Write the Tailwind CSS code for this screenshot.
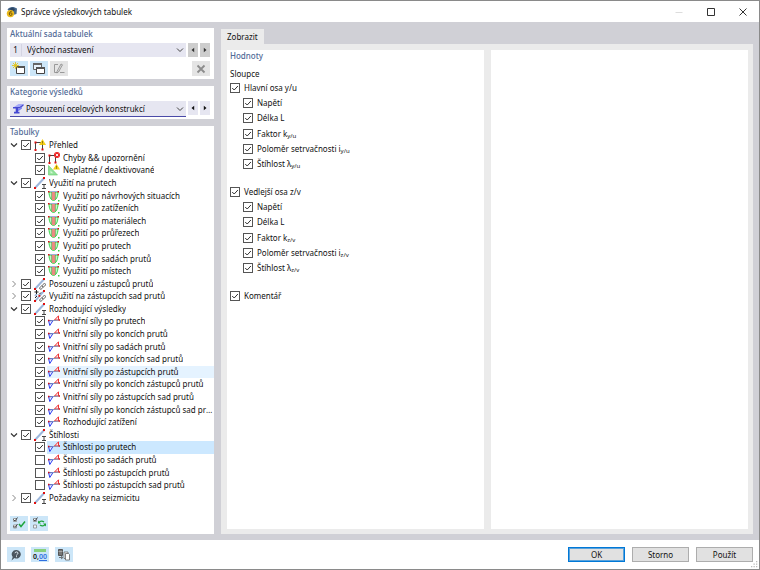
<!DOCTYPE html>
<html lang="cs">
<head>
<meta charset="utf-8">
<meta name="viewport" content="width=device-width, initial-scale=1">
<title>Správce výsledkových tabulek</title>
<script src="https://cdn.jsdelivr.net/npm/@tailwindcss/browser@4"></script>
</head>
<body class="flex h-screen flex-col border border-[#8a8a8a] bg-white font-['Noto_Sans','Open_Sans',sans-serif] text-[8px] leading-[12px] text-[#111]">

<svg class="hidden" aria-hidden="true">
  <symbol id="i-overview" viewBox="0 0 12 12">
    <path d="M1.500 11V3.500h7V10" fill="none" stroke="#444" stroke-width="1"/>
    <path d="M.5 2.500h2v2h-2zM.5 10h2v2h-2zM7.500 9.500h2v2h-2z" fill="#e01010"/>
    <path d="M8.500 0 12 6H5z" fill="#f5cf17"/><path d="M8.500 2v2.200M8.500 4.700v.8" stroke="#6b5600" stroke-width=".7"/>
  </symbol>
  <symbol id="i-errors" viewBox="0 0 12 12">
    <path d="M1.500 11V3.500h6V10" fill="none" stroke="#444" stroke-width="1"/>
    <path d="M.5 2.500h2v2h-2zM.5 10h2v2h-2zM6.500 9.500h2v2h-2z" fill="#e01010"/>
    <circle cx="9" cy="3" r="3" fill="#ee2424"/><path d="M7.800 1.800l2.400 2.400M10.200 1.800 7.800 4.200" stroke="#fff" stroke-width=".9"/>
  </symbol>
  <symbol id="i-invalid" viewBox="0 0 12 12">
    <path d="M.5 1.500v9.500h9z" fill="#93e39a" stroke="#63c96d" stroke-width=".6"/><path d="M2.500 6.500v2.700h2.700z" fill="#d5f7d7"/>
    <path d="M8.500 0 12 5.500H5z" fill="#f5cf17"/><path d="M8.500 1.800v2M8.500 4.300v.7" stroke="#6b5600" stroke-width=".7"/>
  </symbol>
  <symbol id="i-member" viewBox="0 0 12 12">
    <path d="M1.200 10.800 10 1.200" stroke="#9db7dc" stroke-width="2"/>
    <path d="M0 10h2v2H0zM9 0h2v2H9z" fill="#e01010"/>
    <path d="M8 7.500h4M8 11.500h4M10 7.500v4" stroke="#444" stroke-width="1"/>
  </symbol>
  <symbol id="i-rep" viewBox="0 0 12 12">
    <path d="M1.200 10.800 10 1.200" stroke="#9db7dc" stroke-width="2"/>
    <path d="M0 10h2v2H0zM9 0h2v2H9z" fill="#e01010"/>
    <g fill="none" stroke="#666" stroke-width=".9"><ellipse cx="7.300" cy="9.600" rx="1.200" ry="2" transform="rotate(45 7.300 9.600)"/><ellipse cx="9.900" cy="7.200" rx="1.200" ry="2" transform="rotate(45 9.900 7.200)"/></g>
  </symbol>
  <symbol id="i-repset" viewBox="0 0 12 12">
    <path d="M1.200 10.800 10 1.200M1 6l2-2" stroke="#9db7dc" stroke-width="1.800"/>
    <path d="M0 10h2v2H0zM9 0h2v2H9zM4.500 5h1.800v1.800H4.500z" fill="#e01010"/>
    <path d="M.5 2h4M2.500 0v4M7 2.500 5 4.500M1 8l2-2" stroke="#222" stroke-width="1"/>
    <g fill="none" stroke="#666" stroke-width=".9"><ellipse cx="7.300" cy="9.600" rx="1.200" ry="2" transform="rotate(45 7.300 9.600)"/><ellipse cx="9.900" cy="7.200" rx="1.200" ry="2" transform="rotate(45 9.900 7.200)"/></g>
  </symbol>
  <symbol id="i-usage" viewBox="0 0 12 12">
    <path d="M1 2C1 6.500 3 10.500 5.500 10.500S10 6.500 10 2z" fill="#c4f7c6" stroke="#35d845" stroke-width="1"/>
    <path d="M4 2h3v8H4z" fill="#ee8b84"/><path d="M3.600 2v7.500M7.400 2v7.500" stroke="#4f8a3c" stroke-width=".6"/>
    <path d="M1 1.500h9" stroke="#9db2d8" stroke-width="1"/>
    <path d="M0 1h1.500v1.500H0zM9.500 1H11v1.500H9.500z" fill="#e01010"/><path d="M10 10h1.500v1.500H10z" fill="#35d040"/>
  </symbol>
  <symbol id="i-force" viewBox="0 0 12 12">
    <path d="M.5 5.500 5 5.500 1.800 10.500z" fill="#eef0ff" stroke="#2a3cf5" stroke-width="1"/>
    <path d="M6.500 5 10.500.8V5z" fill="#ffe9e9" stroke="#f03030" stroke-width="1"/>
    <path d="M1 6 11.500 5" stroke="#8593b5" stroke-width="1"/>
    <path d="M0 4.800h1.400v1.400H0zM10.600 4.300H12v1.400h-1.400z" fill="#e01010"/>
  </symbol>
  <symbol id="i-down" viewBox="0 0 8 8"><path d="M1 2.500 4 5.500l3-3" fill="none" stroke="#333" stroke-width="1.200"/></symbol>
  <symbol id="i-right" viewBox="0 0 8 8"><path d="M2.500 1 5.500 4l-3 3" fill="none" stroke="#888" stroke-width="1"/></symbol>
  <symbol id="i-combo" viewBox="0 0 8 8"><path d="M1 2.500 4 5.500l3-3" fill="none" stroke="#444" stroke-width="1"/></symbol>
  <symbol id="i-prev" viewBox="0 0 6 6"><path d="M4.200.8v4.400L1.500 3z" fill="currentColor"/></symbol>
  <symbol id="i-next" viewBox="0 0 6 6"><path d="M1.800.8v4.400L4.500 3z" fill="currentColor"/></symbol>
  <symbol id="i-check" viewBox="0 0 10 10"><path d="M2.200 5 4.200 7 7.900 3" fill="none" stroke="#333" stroke-width="1"/></symbol>
</svg>

<header class="flex h-[21px] shrink-0 items-center pl-[5px]">
  <svg class="mr-[3px] size-[12px]" viewBox="0 0 12 12"><path d="M1.500 3.500C3 .5 8 0 11 2.500L10.500 8 7 9z" fill="#47688c"/><path d="M3 3l3-1.500L9 3 8 5z" fill="#2c4561"/><circle cx="4.500" cy="7.600" r="3.700" fill="#e9b91c"/><path d="M5.800 5.200C4 5.200 3.300 6.500 3.300 8c0 2 2.800 2 2.800 0 0-1.400-2-1.600-2.700-.3" fill="none" stroke="#6d5008" stroke-width=".9"/></svg>
  <h1 class="flex-1">Správce výsledkových tabulek</h1>
  <button class="grid h-full w-8 place-items-center" aria-label="Minimalizovat" disabled><svg class="size-[10px]" viewBox="0 0 10 10"><path d="M1.500 5.500h7" stroke="#ddd"/></svg></button>
  <button class="grid h-full w-8 place-items-center" aria-label="Maximalizovat"><svg class="size-[10px]" viewBox="0 0 10 10"><path d="M1.500 1.500h7v7h-7z" fill="none" stroke="#333"/></svg></button>
  <button class="grid h-full w-8 place-items-center" aria-label="Zavřít"><svg class="size-[10px]" viewBox="0 0 10 10"><path d="M1.500 1.500l7 7M8.500 1.500l-7 7" stroke="#333"/></svg></button>
</header>

<main class="flex min-h-0 flex-1 bg-[#d0d0d6] py-[6px] pr-[6px] pl-[6px]">
  <aside class="mr-[7px] flex w-[207px] shrink-0 flex-col gap-[7px]">
    <section class="bg-white pr-[4px] pb-[3px] pl-[3px]">
      <label for="set" class="block font-medium text-[#506a96]">Aktuální sada tabulek</label>
      <div class="mt-[3px] flex h-[14px] gap-[2px]">
        <div class="relative flex flex-1 items-center bg-[#e6e6f1]">
          <span class="w-[12px] border-r border-[#d4d4e2] text-center">1</span>
          <select id="set" class="h-full flex-1 appearance-none pl-[5px] outline-none"><option>Výchozí nastavení</option></select>
          <svg class="pointer-events-none absolute right-[2px] size-[8px]"><use href="#i-combo"/></svg>
        </div>
        <button class="grid w-[10px] place-items-center bg-[#cdcdcd] text-[#333]" aria-label="Předchozí sada"><svg class="size-[6px]"><use href="#i-prev"/></svg></button>
        <button class="grid w-[10px] place-items-center bg-[#cdcdcd] text-[#333]" aria-label="Další sada"><svg class="size-[6px]"><use href="#i-next"/></svg></button>
      </div>
      <div class="mt-[4px] flex gap-[2px]">
        <button class="grid h-[15px] w-[18px] place-items-center bg-[#cce6f8]" aria-label="Nová sada"><svg class="h-[13px] w-[14px]" viewBox="0 0 14 13"><path d="M4.500 4.500h8v7h-8z" fill="#fff" stroke="#444"/><path d="M4 4h9v2H4z" fill="#555"/><path d="M3.500 0v7M0 3.500h7M1 1l5 5M6 1 1 6" stroke="#e2c41c" stroke-width=".9"/></svg></button>
        <button class="grid h-[15px] w-[18px] place-items-center bg-[#cce6f8]" aria-label="Kopírovat sadu"><svg class="h-[13px] w-[14px]" viewBox="0 0 14 13"><path d="M1.500 1.500h8v6h-8z" fill="#e8f2fb" stroke="#666"/><path d="M1 1h9v2H1z" fill="#666"/><path d="M4.500 5.500h8v6h-8z" fill="#fff" stroke="#444"/><path d="M4 5h9v2H4z" fill="#555"/></svg></button>
        <button class="grid h-[15px] w-[18px] place-items-center bg-[#e4e4e4]" aria-label="Přejmenovat sadu" disabled><svg class="h-[13px] w-[14px]" viewBox="0 0 14 13"><path d="M6 2.500H2.500v8H6M8 10.500h4.500" fill="none" stroke="#999"/><path d="M5 9.500 9 2l1.500.8-4 7.200L4.800 11z" fill="#ddd" stroke="#888" stroke-width=".8"/></svg></button>
        <button class="ml-auto grid h-[15px] w-[18px] place-items-center bg-[#e4e4e4]" aria-label="Smazat sadu" disabled><svg class="size-[10px]" viewBox="0 0 10 10"><path d="M1.500 1.500l7 7M8.500 1.500l-7 7" stroke="#8c8c8c" stroke-width="1.800"/></svg></button>
      </div>
    </section>

    <section class="bg-white pr-[4px] pb-[2px] pl-[3px]">
      <label for="cat" class="block font-medium text-[#506a96]">Kategorie výsledků</label>
      <div class="mt-[3px] flex h-[16px] items-start gap-[2px]">
        <div class="relative flex h-full flex-1 items-center border-b border-[#4a4aa8] bg-[#e6e6f1] pl-[3px]">
          <svg class="size-[11px]" viewBox="0 0 11 11"><path d="M1 4 5.500 1H10.500L6.500 4z" fill="#a3a8f7"/><path d="M0 4h6.500l4-3v1.800L6.500 5.500H5v3.300h1.500v1.700H1V8.800h1.700V5.500H0z" fill="#4548d2"/><path d="M5 5.500h1.500L9 3.800v1.700L5 8.500z" fill="#7d84ee"/></svg>
          <select id="cat" class="h-full flex-1 appearance-none pl-[2px] outline-none"><option>Posouzení ocelových konstrukcí</option></select>
          <svg class="pointer-events-none absolute right-[2px] size-[8px]"><use href="#i-combo"/></svg>
        </div>
        <button class="grid h-[14px] w-[10px] place-items-center bg-[#e6e6f1]" aria-label="Předchozí kategorie"><svg class="size-[6px]"><use href="#i-prev"/></svg></button>
        <button class="grid h-[14px] w-[10px] place-items-center bg-[#e6e6f1]" aria-label="Další kategorie"><svg class="size-[6px]"><use href="#i-next"/></svg></button>
      </div>
    </section>

    <section class="flex min-h-0 flex-1 flex-col bg-white pb-[3px] pl-[3px]">
      <h2 class="font-medium text-[#506a96]">Tabulky</h2>
      <ul id="tree" class="mt-px grid min-h-0 flex-1 auto-rows-fr grid-cols-1" role="tree"></ul>
      <div class="mt-[12px] flex gap-[2px]">
        <button class="grid h-[15px] w-[18px] place-items-center bg-[#cce6f8]" aria-label="Vybrat vše"><svg class="h-[13px] w-[14px]" viewBox="0 0 14 13"><path d="M1.500 1.500h3v3h-3zM1.500 8h3v3h-3z" fill="#fff" stroke="#888" stroke-width=".8"/><path d="M1.500 2.500 3 4l2.500-3.500M1.500 9 3 10.500 5.500 7" fill="none" stroke="#333" stroke-width=".9"/><path d="M7 7l2 2.500L13 4.500" fill="none" stroke="#1fa53c" stroke-width="1.500"/></svg></button>
        <button class="grid h-[15px] w-[18px] place-items-center bg-[#cce6f8]" aria-label="Obrátit výběr"><svg class="h-[13px] w-[14px]" viewBox="0 0 14 13"><path d="M1.500 1.500h3v3h-3zM1.500 8h3v3h-3z" fill="#eef6fc" stroke="#888" stroke-width=".8"/><path d="M1.500 2.500 3 4l2.500-3.500" fill="none" stroke="#333" stroke-width=".9"/><path d="M7 5.500C8 3.800 10.500 3.800 12 5M13 7.500c-1 1.800-3.500 1.800-5 .5" fill="none" stroke="#1fa53c" stroke-width="1.300"/><path d="M6 3.500v3h3zM14 9.500v-3h-3z" fill="#1fa53c"/></svg></button>
      </div>
    </section>
  </aside>

  <div class="mt-px flex min-w-0 flex-1 flex-col">
    <div role="tablist" class="flex"><button role="tab" aria-selected="true" class="h-[15px] bg-[#ebebeb] px-[6px]">Zobrazit</button></div>
    <div class="grid min-h-0 flex-1 grid-cols-2 gap-[7px] bg-[#ebebeb] pt-[6px] pr-[5px] pb-[5px] pl-[6px]">
      <section class="bg-white px-[3px]">
        <h2 class="font-medium text-[#506a96]">Hodnoty</h2>
        <h3 class="mt-[6px]">Sloupce</h3>
        <div id="values" class="flex flex-col gap-[12px]"></div>
      </section>
      <section class="bg-white"></section>
    </div>
  </div>
</main>

<footer class="relative flex h-[29px] shrink-0 items-center gap-[6px] px-[6px]">
  <button class="grid h-[15px] w-[18px] place-items-center bg-[#cce6f8]" aria-label="Nápověda"><svg class="size-[12px]" viewBox="0 0 12 12"><path d="M6.500 1a4.300 4.300 0 1 1-2 8.100L1.500 11.500 2.700 8A4.300 4.300 0 0 1 6.500 1z" fill="#4c5760"/><path d="M5 4.200C5 2.500 8 2.500 8 4.200 8 5.300 6.500 5.200 6.500 6.500M6.500 7.200v1" fill="none" stroke="#e8f2fa" stroke-width="1"/></svg></button>
  <button class="grid h-[15px] w-[18px] content-center justify-items-center bg-[#cce6f8]" aria-label="Jednotky a desetinná místa"><span class="h-[3px] w-[12px] bg-[#86cf7c]"></span><span class="text-[7px] leading-[9px] font-semibold">0,<span class="text-[#2f6fe0] underline">00</span></span></button>
  <button class="grid h-[15px] w-[18px] place-items-center bg-[#cce6f8]" aria-label="Exportovat"><svg class="h-[13px] w-[14px]" viewBox="0 0 14 13"><path d="M1.500 1.500h4v6h-4z" fill="#777" stroke="#555"/><path d="M1.500 3.500h4" stroke="#bbb" stroke-width=".7"/><path d="M2 9.500h3M4 8l2 1.500L4 11" fill="none" stroke="#555" stroke-width=".8"/><path d="M7 4h4v6.500H7z" fill="#fff" stroke="#666" stroke-width=".8"/><path d="M8.500 5.500h3l1 1V12h-4z" fill="#fff" stroke="#666" stroke-width=".8"/></svg></button>
  <div class="ml-auto flex gap-[7px]">
    <button class="h-[15px] w-[57px] border border-[#0078d7] bg-[#e1e1e1] leading-[11px] outline outline-[#0078d7]/60 -outline-offset-2">OK</button>
    <button class="h-[15px] w-[57px] border border-[#adadad] bg-[#e1e1e1] leading-[11px]">Storno</button>
    <button class="h-[15px] w-[57px] border border-[#adadad] bg-[#e1e1e1] leading-[11px]">Použít</button>
  </div>
  <svg class="absolute right-px bottom-px size-[7px]" viewBox="0 0 7 7"><path d="M5 0h1.300v1.300H5zM5 2.500h1.300v1.300H5zM5 5h1.300v1.300H5zM2.500 2.500h1.300v1.300H2.500zM2.500 5h1.300v1.300H2.500zM0 5h1.300v1.300H0z" fill="#bbb"/></svg>
</footer>

<script>
const box = (checked) => `<span class="relative size-[10px] shrink-0"><input type="checkbox" ${checked ? 'checked' : ''} class="peer block size-[10px] appearance-none border border-[#555] bg-white"><svg class="pointer-events-none absolute inset-0 hidden size-[10px] peer-checked:block"><use href="#i-check"/></svg></span>`;

// [level, icon, text, state] where state is open, closed, hover, selected or off
const rows = [
  [0, 'overview', 'Přehled', 'open'],
  [1, 'errors', 'Chyby &amp;&amp; upozornění'],
  [1, 'invalid', 'Neplatné / deaktivované'],
  [0, 'member', 'Využití na prutech', 'open'],
  [1, 'usage', 'Využití po návrhových situacích'],
  [1, 'usage', 'Využití po zatíženích'],
  [1, 'usage', 'Využití po materiálech'],
  [1, 'usage', 'Využití po průřezech'],
  [1, 'usage', 'Využití po prutech'],
  [1, 'usage', 'Využití po sadách prutů'],
  [1, 'usage', 'Využití po místech'],
  [0, 'rep', 'Posouzení u zástupců prutů', 'closed'],
  [0, 'repset', 'Využití na zástupcích sad prutů', 'closed'],
  [0, 'member', 'Rozhodující výsledky', 'open'],
  [1, 'force', 'Vnitřní síly po prutech'],
  [1, 'force', 'Vnitřní síly po koncích prutů'],
  [1, 'force', 'Vnitřní síly po sadách prutů'],
  [1, 'force', 'Vnitřní síly po koncích sad prutů'],
  [1, 'force', 'Vnitřní síly po zástupcích prutů', 'hover'],
  [1, 'force', 'Vnitřní síly po koncích zástupců prutů'],
  [1, 'force', 'Vnitřní síly po zástupcích sad prutů'],
  [1, 'force', 'Vnitřní síly po koncích zástupců sad prutů'],
  [1, 'force', 'Rozhodující zatížení'],
  [0, 'member', 'Štíhlosti', 'open'],
  [1, 'force', 'Štíhlosti po prutech', 'selected'],
  [1, 'force', 'Štíhlosti po sadách prutů', 'off'],
  [1, 'force', 'Štíhlosti po zástupcích prutů', 'off'],
  [1, 'force', 'Štíhlosti po zástupcích sad prutů', 'off'],
  [0, 'member', 'Požadavky na seizmicitu', 'closed'],
];
document.getElementById('tree').innerHTML = rows.map(([level, icon, text, state]) => {
  const bg = state === 'hover' ? 'bg-[#e5f3ff]' : state === 'selected' ? 'bg-[#cce8ff]' : '';
  const toggle = level ? '<span class="w-[25px] shrink-0"></span>'
    : `<button class="mr-[5px] grid w-[6px] shrink-0 place-items-center" aria-label="Rozbalit"><svg class="size-[8px]"><use href="#i-${state === 'open' ? 'down' : 'right'}"/></svg></button>`;
  return `<li role="treeitem" class="flex min-h-0 items-center">${toggle}<label class="flex h-full min-w-0 flex-1 items-center">${box(state !== 'off')}<span class="ml-[2px] flex h-full min-w-0 flex-1 items-center gap-[3px] pl-px ${bg}"><svg class="size-[12px] shrink-0"><use href="#i-${icon}"/></svg><span class="truncate">${text}</span></span></label></li>`;
}).join('');

const sub = (s) => `<sub class="-bottom-px text-[6px] leading-none">${s}</sub>`;
const group = (title, s) => `<div role="group" aria-label="${title} ${s}" class="grid h-[92px] auto-rows-fr">
  <label class="flex items-center gap-[4px]">${box(true)}${title} ${s}</label>
  ${['Napětí', 'Délka L', 'Faktor k' + sub(s), 'Poloměr setrvačnosti i' + sub(s), 'Štíhlost λ' + sub(s)]
    .map((t) => `<label class="ml-[13px] flex items-center gap-[4px]">${box(true)}<span>${t}</span></label>`).join('')}
</div>`;
document.getElementById('values').innerHTML = group('Hlavní osa', 'y/u') + group('Vedlejší osa', 'z/v')
  + `<label class="flex h-[15px] items-center gap-[4px]">${box(true)}Komentář</label>`;
</script>
</body>
</html>
